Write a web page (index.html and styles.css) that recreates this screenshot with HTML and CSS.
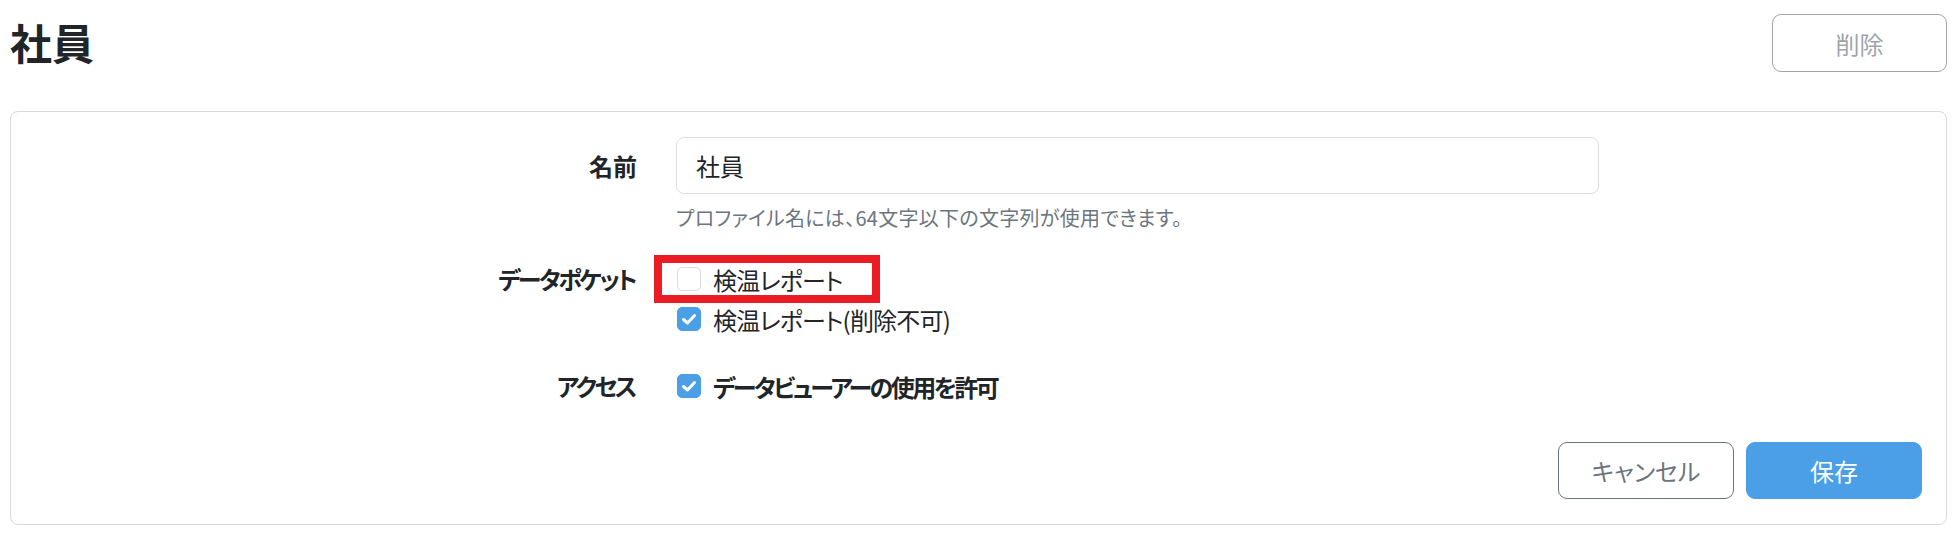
FILE: index.html
```html
<!DOCTYPE html>
<html lang="ja">
<head>
  <meta charset="UTF-8" />
  <meta name="viewport" content="width=device-width, initial-scale=1.0"/>
  <title>社員</title>
  <link rel="stylesheet" href="styles.css">
</head>
<body>
  <div class="page">
    <header class="page-head">
      <h1 class="page-title">社員</h1>
      <button class="btn btn-outline" disabled>削除</button>
    </header>

    <section class="card">
      <div class="form-row">
        <label class="form-label label-input" for="profileName">名前</label>
        <div class="form-field">
          <input type="text" id="profileName" class="text-input" value="社員" />
          <p class="hint">プロファイル名には、64文字以下の文字列が使用できます。</p>
        </div>
      </div>

      <div class="form-row">
        <div class="form-label">データポケット</div>
        <div class="form-field">
          <label class="check">
            <span class="check-box"></span>
            検温レポート
            <span class="highlight"></span>
          </label>
          <label class="check">
            <span class="check-box checked">
              <svg viewBox="0 0 24 24" width="24" height="24"><polyline points="6.5,12.5 10.5,16 17.5,8.5" /></svg>
            </span>
            検温レポート(削除不可)
          </label>
        </div>
      </div>

      <div class="form-row">
        <div class="form-label">アクセス</div>
        <div class="form-field">
          <label class="check check-bold">
            <span class="check-box checked">
              <svg viewBox="0 0 24 24" width="24" height="24"><polyline points="6.5,12.5 10.5,16 17.5,8.5" /></svg>
            </span>
            データビューアーの使用を許可
          </label>
        </div>
      </div>

      <div class="card-foot">
        <button class="btn btn-outline">キャンセル</button>
        <button class="btn btn-primary">保存</button>
      </div>
    </section>
  </div>
</body>
</html>
```

FILE: styles.css
```css
body {
  margin: 0;
  padding: 0;
  background-color: #fff;
  color: #212529;
  font-family: "Noto Sans CJK JP", "Noto Sans", sans-serif;
  font-feature-settings: "palt";
  font-size: 24px;
}

.page {
  padding: 14px 11px 0 10px;
}

.page-head {
  display: flex;
  justify-content: space-between;
  align-items: flex-start;
}

.page-title {
  margin: 0;
  font-size: 42px;
  line-height: 56px;
  font-weight: 700;
}

.btn {
  width: 176px;
  height: 57px;
  border-radius: 9px;
  font-family: inherit;
  font-size: 24px;
  font-feature-settings: "palt";
  cursor: pointer;
}

.btn-outline {
  background-color: #fff;
  color: #6c757d;
  border: 1px solid #6c757d;
}

.btn-outline:disabled {
  opacity: 0.65;
  cursor: default;
  width: 175px;
  height: 58px;
}

.btn-primary {
  background-color: #4a9fe7;
  color: #fff;
  border: 1px solid #4a9fe7;
}

.card {
  margin-top: 39px;
  border: 1px solid #d9d9d9;
  border-radius: 8px;
  padding: 25px 24px 25px 0;
}

.form-row {
  display: grid;
  grid-template-columns: 626px 923px;
  column-gap: 39px;
  margin-bottom: 27px;
}

.form-label {
  text-align: right;
  font-weight: 700;
  line-height: 40px;
  letter-spacing: -2.5px;
  padding-right: 2px;
}

.label-input {
  line-height: 57px;
  letter-spacing: 0;
  padding-right: 0;
}

.text-input {
  display: block;
  width: 100%;
  height: 57px;
  box-sizing: border-box;
  border: 1px solid #dedede;
  border-radius: 8px;
  padding: 0 19px;
  font-family: inherit;
  font-size: 24px;
  color: #212529;
}

.hint {
  margin: 10px 0 0;
  font-size: 20px;
  line-height: 28px;
  letter-spacing: 0.3px;
  color: #6c757d;
}

.check {
  position: relative;
  display: flex;
  align-items: center;
  gap: 12px;
  height: 40px;
  letter-spacing: -0.8px;
}

.check-bold {
  font-weight: 700;
  letter-spacing: -2.5px;
}

.check-box {
  width: 24px;
  height: 24px;
  margin-left: 1px;
  box-sizing: border-box;
  border: 1px solid #dcdcdc;
  border-radius: 5px;
  background-color: #fff;
}

.check-box.checked {
  border-color: #4a9fe7;
  background-color: #4a9fe7;
}

.check-box svg {
  display: block;
  margin: -1px;
  fill: none;
  stroke: #fff;
  stroke-width: 3;
  stroke-linecap: round;
  stroke-linejoin: round;
}

.highlight {
  position: absolute;
  left: -22px;
  top: -4px;
  width: 226px;
  height: 48px;
  box-sizing: border-box;
  border: 8px solid #ec1c24;
}

.card-foot {
  display: flex;
  justify-content: flex-end;
  gap: 12px;
  margin-top: 36px;
}
```
